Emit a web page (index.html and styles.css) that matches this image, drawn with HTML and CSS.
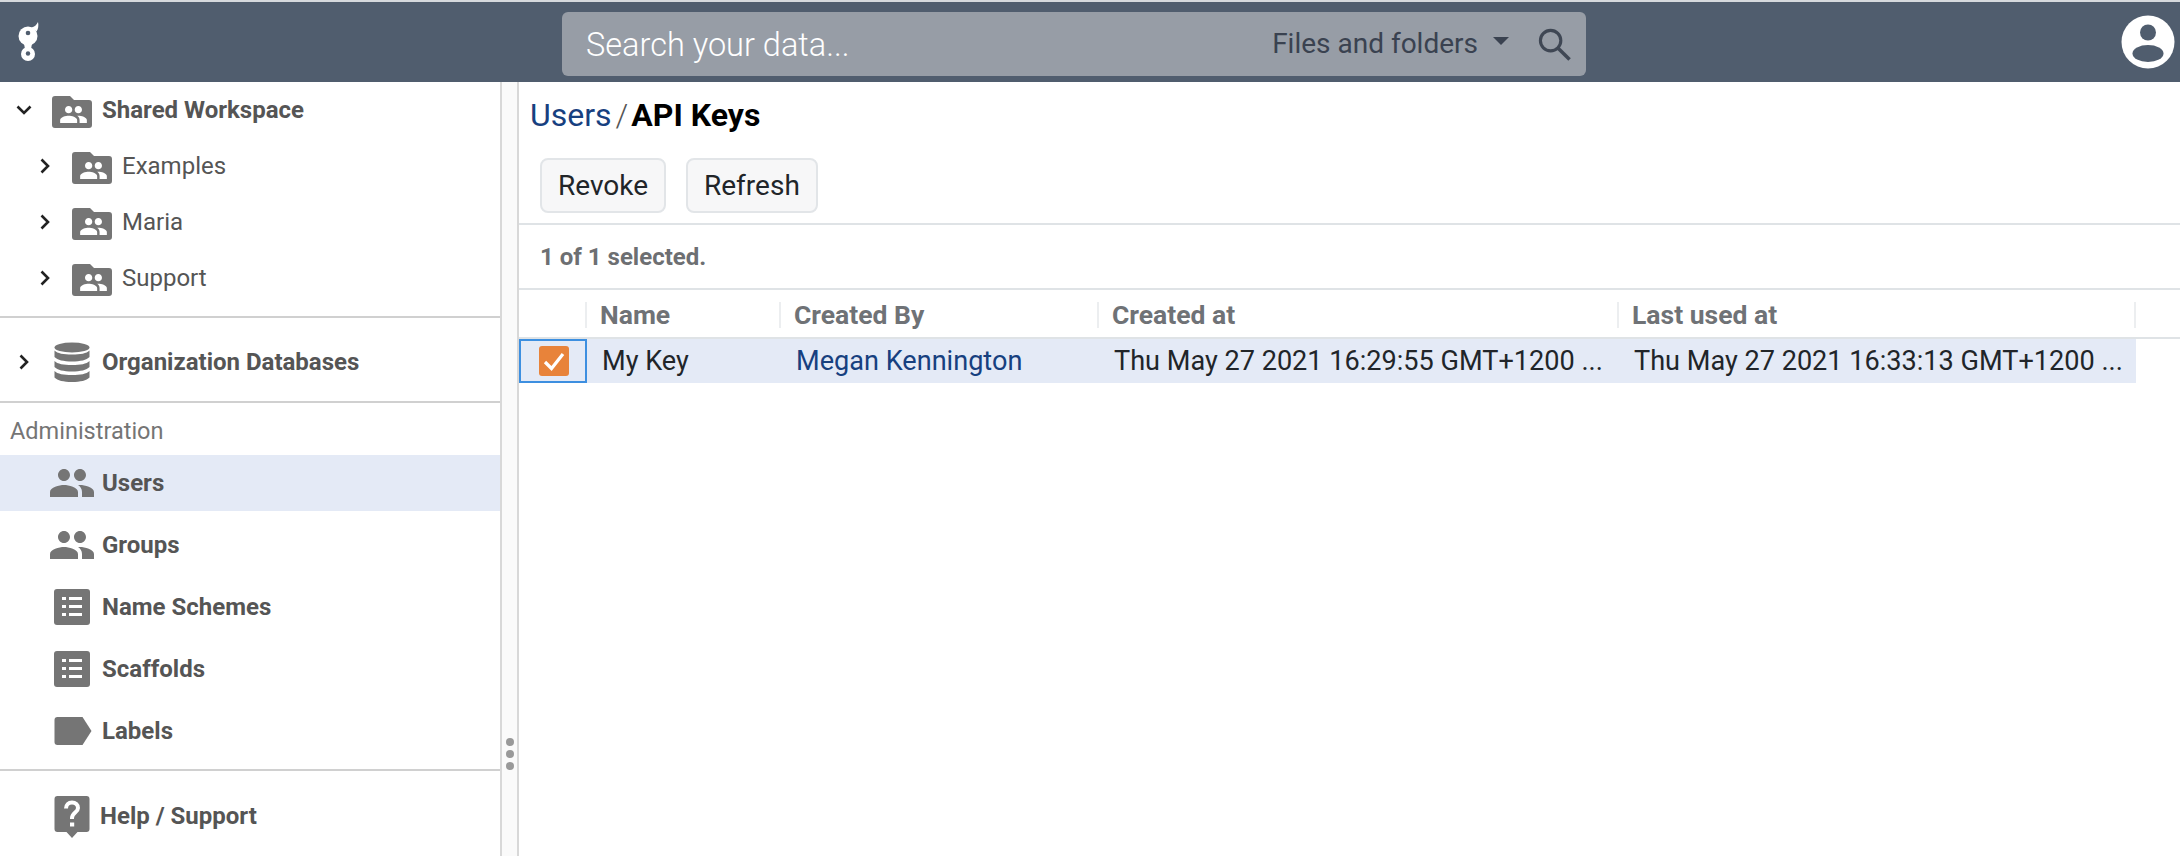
FILE: index.html
```html
<!DOCTYPE html>
<html lang="en">
<head>
<meta charset="utf-8">
<title>API Keys</title>
<link rel="stylesheet" href="styles.css">
</head>
<body>
<svg class="defs" width="0" height="0" aria-hidden="true">
  <defs>
    <symbol id="i-people" viewBox="1 5 22 14"><path d="M16 11c1.66 0 2.99-1.34 2.99-3S17.66 5 16 5c-1.66 0-3 1.34-3 3s1.34 3 3 3zm-8 0c1.66 0 2.99-1.34 2.99-3S9.66 5 8 5C6.34 5 5 6.34 5 8s1.34 3 3 3zm0 2c-2.33 0-7 1.17-7 3.5V19h14v-2.5c0-2.33-4.67-3.5-7-3.5zm8 0c-.29 0-.62.02-.97.05 1.16.84 1.97 1.97 1.97 3.45V19h6v-2.5c0-2.33-4.67-3.5-7-3.5z"/></symbol>
    <symbol id="i-folder" viewBox="0 0 40 32"><path d="M3 0h15l4 4h15a3 3 0 0 1 3 3v22a3 3 0 0 1-3 3H3a3 3 0 0 1-3-3V3a3 3 0 0 1 3-3z" fill="#757575"/><svg x="8" y="10" width="27" height="17" viewBox="1 5 22 14"><path fill="#fff" d="M16 11c1.66 0 2.99-1.34 2.99-3S17.66 5 16 5c-1.66 0-3 1.34-3 3s1.34 3 3 3zm-8 0c1.66 0 2.99-1.34 2.99-3S9.66 5 8 5C6.34 5 5 6.34 5 8s1.34 3 3 3zm0 2c-2.33 0-7 1.17-7 3.5V19h14v-2.5c0-2.33-4.67-3.5-7-3.5zm8 0c-.29 0-.62.02-.97.05 1.16.84 1.97 1.97 1.97 3.45V19h6v-2.5c0-2.33-4.67-3.5-7-3.5z"/></svg></symbol>
    <symbol id="i-list" viewBox="0 0 36 36"><rect width="36" height="36" rx="3" fill="#757575"/><path fill="#fff" d="M8 8h4v3H8zM15 8h13v3H15zM8 16h4v3H8zM15 16h13v3H15zM8 24h4v3H8zM15 24h13v3H15z"/></symbol>
    <symbol id="i-right" viewBox="0 0 10 16"><path d="M1.500 1.500 8 8l-6.500 6.500" fill="none" stroke="#222" stroke-width="2.600"/></symbol>
    <symbol id="i-down" viewBox="0 0 16 10"><path d="M1.500 1.500 8 8l6.500-6.500" fill="none" stroke="#222" stroke-width="2.600"/></symbol>
  </defs>
</svg>

<div class="app">
  <header class="topbar">
    <svg class="logo" viewBox="0 0 24 44" aria-label="Logo">
      <g fill="#fff">
        <circle cx="12" cy="16" r="9.500"/>
        <circle cx="12" cy="34" r="7"/>
        <path d="M8 23.500h8l-1 5.500H9z"/>
        <path d="M15.500 7.500c3-.5 5-2.500 6.500-5.500 .8 3.500 .3 7-1.500 9.500z"/>
      </g>
      <circle cx="12" cy="13" r="2.300" fill="#505d6e"/>
      <circle cx="12" cy="33.500" r="2.200" fill="#505d6e"/>
    </svg>
    <div class="search">
      <span class="search-placeholder">Search your data...</span>
      <span class="search-scope">Files and folders</span>
      <span class="caret"></span>
      <svg class="search-icon" viewBox="0 0 36 36"><circle cx="14" cy="14" r="10.500" fill="none" stroke="#3f4754" stroke-width="3.200"/><path d="m21.500 21.500 12 12" stroke="#3f4754" stroke-width="3.600" fill="none"/></svg>
    </div>
    <svg class="avatar" viewBox="0 0 54 54" aria-label="Account">
      <circle cx="27" cy="27" r="26.500" fill="#fff"/>
      <circle cx="27" cy="17.500" r="8" fill="#505d6e"/>
      <ellipse cx="27" cy="38.500" rx="15.500" ry="8.500" fill="#505d6e"/>
    </svg>
  </header>

  <div class="body">
    <nav class="sidebar">
      <section class="nav-tree">
        <div class="row row-top">
          <svg class="chev-down"><use href="#i-down"/></svg>
          <svg class="folder"><use href="#i-folder"/></svg>
          <span class="row-bold">Shared Workspace</span>
        </div>
        <div class="row row-sub">
          <svg class="chev-right"><use href="#i-right"/></svg>
          <svg class="folder"><use href="#i-folder"/></svg>
          <span class="row-plain">Examples</span>
        </div>
        <div class="row row-sub">
          <svg class="chev-right"><use href="#i-right"/></svg>
          <svg class="folder"><use href="#i-folder"/></svg>
          <span class="row-plain">Maria</span>
        </div>
        <div class="row row-sub">
          <svg class="chev-right"><use href="#i-right"/></svg>
          <svg class="folder"><use href="#i-folder"/></svg>
          <span class="row-plain">Support</span>
        </div>
      </section>

      <section class="nav-db">
        <div class="row row-db">
          <svg class="chev-right"><use href="#i-right"/></svg>
          <svg class="db" viewBox="0 0 35 40">
            <g fill="#757575">
              <ellipse cx="17.500" cy="5.500" rx="17.500" ry="5"/>
              <path d="M0 8.500c3 3 9 4 17.500 4S32 11.500 35 8.500V15c-3 3-9 4.500-17.500 4.500S3 18 0 15z"/>
              <path d="M0 19c3 3 9 4 17.500 4S32 22 35 19v6c-3 3-9 4.500-17.500 4.500S3 28 0 25z"/>
              <path d="M0 29c3 3 9 4 17.500 4S32 32 35 29v6.500c-3 3-9 4.500-17.500 4.500S3 38.500 0 35.500z"/>
            </g>
          </svg>
          <span class="row-bold">Organization Databases</span>
        </div>
      </section>

      <section class="nav-admin">
        <div class="admin-title">Administration</div>
        <div class="item item-active">
          <span class="item-icon"><svg class="people"><use href="#i-people"/></svg></span>
          <span class="row-bold">Users</span>
        </div>
        <div class="item">
          <span class="item-icon"><svg class="people"><use href="#i-people"/></svg></span>
          <span class="row-bold">Groups</span>
        </div>
        <div class="item">
          <span class="item-icon"><svg class="list"><use href="#i-list"/></svg></span>
          <span class="row-bold">Name Schemes</span>
        </div>
        <div class="item">
          <span class="item-icon"><svg class="list"><use href="#i-list"/></svg></span>
          <span class="row-bold">Scaffolds</span>
        </div>
        <div class="item">
          <span class="item-icon"><svg class="label" viewBox="0 0 37 28"><path fill="#757575" d="M3 0h25l9 14-9 14H3a3 3 0 0 1-3-3V3a3 3 0 0 1 3-3z"/></svg></span>
          <span class="row-bold">Labels</span>
        </div>
      </section>

      <section class="nav-help">
        <span class="item-icon"><svg class="help" viewBox="0 0 35 42"><path fill="#757575" d="M3 0h29a3 3 0 0 1 3 3v30a3 3 0 0 1-3 3h-9l-5.500 6L12 36H3a3 3 0 0 1-3-3V3a3 3 0 0 1 3-3z"/><path d="M11.500 12.500c0-3.500 2.500-6 6-6s6 2.300 6 5.500c0 4.500-6 4.800-6 10v1" fill="none" stroke="#fff" stroke-width="4"/><path fill="#fff" d="M15.500 26.500h4.200v4h-4.200z"/></svg></span>
        <span class="row-bold help-text">Help / Support</span>
      </section>
    </nav>

    <div class="resizer">
      <span class="dot"></span><span class="dot"></span><span class="dot"></span>
    </div>

    <main class="main">
      <div class="crumbs">
        <a class="crumb-link">Users</a><span class="crumb-sep">/</span><strong class="crumb-current">API Keys</strong>
      </div>
      <div class="toolbar">
        <button class="btn">Revoke</button>
        <button class="btn">Refresh</button>
      </div>
      <div class="status">1 of 1 selected.</div>
      <div class="table">
        <div class="thead">
          <div class="th th-check"></div>
          <div class="th">Name</div>
          <div class="th">Created By</div>
          <div class="th">Created at</div>
          <div class="th">Last used at</div>
        </div>
        <div class="tr">
          <div class="td td-check">
            <span class="check"><svg viewBox="0 0 30 30"><path d="M6 16l6.500 6.500L24 8" fill="none" stroke="#fff" stroke-width="3.200"/></svg></span>
          </div>
          <div class="td">My Key</div>
          <div class="td td-link">Megan Kennington</div>
          <div class="td">Thu May 27 2021 16:29:55 GMT+1200 ...</div>
          <div class="td">Thu May 27 2021 16:33:13 GMT+1200 ...</div>
        </div>
      </div>
    </main>
  </div>
</div>
</body>
</html>
```
FILE: styles.css
```css
* { box-sizing: border-box; }
html, body { margin: 0; padding: 0; height: 100%; overflow: hidden; }
body { font-family: Roboto, "Liberation Sans", sans-serif; background: #fff; color: #212529; }
.defs { position: absolute; }

.app { display: flex; flex-direction: column; height: 856px; border-top: 2px solid #d6d9dd; }

.topbar { height: 80px; flex: none; background: #505d6e; display: flex; align-items: center; padding: 0 5px 0 16px; }
.logo { width: 24px; height: 44px; flex: none; }
.search { width: 1024px; height: 64px; margin-left: 522px; margin-top: 4px; background: #979da6; border-radius: 6px; display: flex; align-items: center; padding: 0 14px 0 24px; }
.search-placeholder { flex: 1; color: #fff; font-size: 32.500px; font-weight: 300; padding-top: 2px; }
.search-scope { color: #3a4250; font-size: 28px; margin-top: -1px; }
.caret { width: 0; height: 0; border-left: 8px solid transparent; border-right: 8px solid transparent; border-top: 8px solid #3a4250; margin: 0 28px 6px 15px; }
.search-icon { width: 35px; height: 35px; }
.avatar { width: 54px; height: 54px; margin-left: auto; margin-top: -1px; }

.body { flex: 1; display: flex; min-height: 0; }

.sidebar { width: 500px; flex: none; display: flex; flex-direction: column; }
.nav-tree { height: 234px; border-bottom: 2px solid #d0d0d0; box-sizing: content-box; }
.nav-db { height: 67px; padding-top: 16px; border-bottom: 2px solid #d0d0d0; box-sizing: content-box; }
.nav-admin { height: 366px; }
.nav-help { border-top: 2px solid #d0d0d0; flex: 1; display: flex; align-items: center; padding-top: 6px; }

.row { height: 56px; display: flex; align-items: center; }
.row-top { padding-left: 16px; }
.row-sub { padding-left: 40px; }
.row-db { padding-left: 19px; }
.row-bold { font-size: 24px; font-weight: 700; color: #555; white-space: nowrap; }
.row-plain { font-size: 24px; color: #555; white-space: nowrap; }
.chev-down { width: 16px; height: 10px; margin-right: 20px; }
.chev-right { width: 10px; height: 16px; margin-right: 22px; }
.folder { width: 40px; height: 32px; margin: 4px 10px 0 0; flex: none; }
.row-db .chev-right { margin-right: 25px; }
.db { width: 36px; height: 40px; margin-right: 12px; flex: none; }

.admin-title { height: 52px; padding: 15px 0 0 10px; font-size: 23.500px; color: #757575; font-weight: 400; line-height: 27px; }
.item { height: 56px; margin-bottom: 6px; display: flex; align-items: center; }
.item-active { background: #e4eaf6; }
.item-icon { width: 102px; flex: none; display: flex; justify-content: flex-start; padding-left: 54px; }
.people { width: 44px; height: 28px; margin-left: -4px; fill: #757575; }
.list { width: 36px; height: 36px; }
.label { width: 38px; height: 28px; }
.help { width: 36px; height: 42px; }
.nav-help .item-icon { width: 100px; }
.help-text { margin-top: -2px; }

.resizer { width: 19px; flex: none; background: #fafafa; border-left: 2px solid #d8d8d8; border-right: 2px solid #d8d8d8; display: flex; flex-direction: column; align-items: center; justify-content: flex-start; gap: 4px; padding-top: 656px; }
.dot { width: 8px; height: 8px; border-radius: 50%; background: #999; }

.main { flex: 1; min-width: 0; }
.crumbs { height: 66px; padding: 14px 0 0 11px; font-size: 32px; line-height: 38px; display: flex; }
.crumb-link { color: #17407f; font-weight: 400; }
.crumb-sep { color: #555; margin: 0 3px 0 4px; font-weight: 300; }
.crumb-current { color: #000; font-weight: 700; }
.toolbar { height: 77px; padding: 10px 0 0 21px; display: flex; gap: 20px; align-items: flex-start; border-bottom: 2px solid #dfe3e6; }
.btn { height: 55px; padding: 0 16px; font: 400 28px/1 Roboto, sans-serif; color: #212529; background: #f7f7f8; border: 2px solid #e2e5e8; border-radius: 8px; }
.status { height: 65px; border-bottom: 2px solid #dfe3e6; padding: 19px 0 0 21px; font-size: 24px; font-weight: 700; color: #6d6f72; line-height: 26px; }

.thead, .tr { display: grid; grid-template-columns: 68px 194px 318px 520px 517px; width: 1617px; }
.thead { height: 49px; border-bottom: 2px solid #dfe3e6; width: 100%; align-items: center; padding-top: 2px; }
.th { height: 26px; border-right: 2px solid #eceef0; padding-left: 13px; font-size: 26.500px; font-weight: 700; color: #6f7276; line-height: 26px; white-space: nowrap; }
.tr { height: 44px; background: #e4eaf6; }
.td { font-size: 27.100px; line-height: 44px; padding-left: 15px; color: #212529; white-space: nowrap; }
.td-link { color: #17407f; }
.td-check { border: 2px solid #3d8fe0; padding: 0 0 0 18px; display: flex; align-items: center; background: #e4eaf6; }
.check { width: 30px; height: 30px; border-radius: 3px; background: #e8833a; display: block; }
.check svg { width: 30px; height: 30px; display: block; }
```
